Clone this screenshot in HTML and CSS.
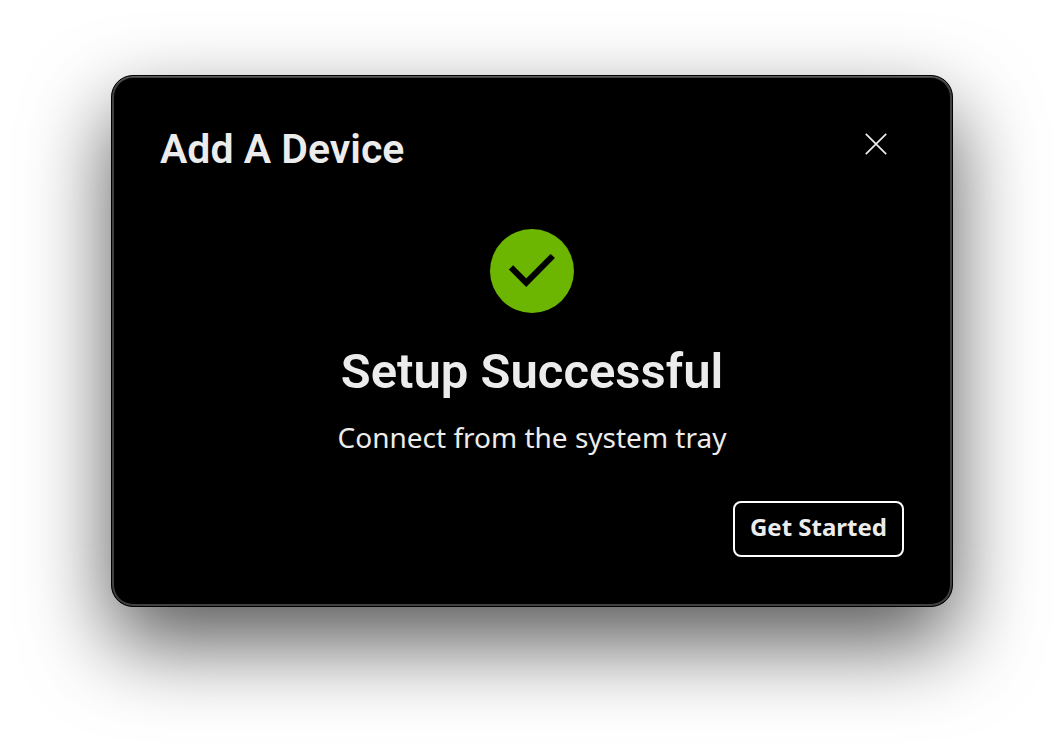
FILE: index.html
```html
<!DOCTYPE html>
<html lang="en">
<head>
    <meta charset="UTF-8">
    <meta name="viewport" content="width=device-width, initial-scale=1.0">
    <title>Add A Device</title>
    <link rel="stylesheet" href="styles.css">
</head>
<body>
    <div class="dialog" role="dialog" aria-labelledby="dialogTitle">
        <div class="dialog-header">
            <h1 id="dialogTitle">Add A Device</h1>
            <button type="button" class="close-button" aria-label="Close">
                <svg width="24" height="24" viewBox="0 0 24 24" fill="none" stroke="currentColor" stroke-width="1.7">
                    <path d="M1.8 1.8 22.2 22.2M22.2 1.8 1.8 22.2" />
                </svg>
            </button>
        </div>
        <div class="dialog-body">
            <svg class="success-icon" width="84" height="84" viewBox="0 0 84 84" aria-hidden="true">
                <circle cx="42" cy="42" r="42" fill="#6cb500" />
                <path d="M21 38.3 36.2 53.7 62.8 27" fill="none" stroke="#000" stroke-width="6" />
            </svg>
            <h2>Setup Successful</h2>
            <p>Connect from the system tray</p>
        </div>
        <div class="dialog-footer">
            <button type="button" class="start-button">Get Started</button>
        </div>
    </div>
</body>
</html>
```

FILE: styles.css
```css
* {
    box-sizing: border-box;
}

body {
    min-height: 100vh;
    margin: 0;
    padding: 75px 111px;
    background-color: #fff;
    color: #ececec;
    font-family: "Noto Sans", sans-serif;
}

.dialog {
    padding: 44px 48px 49px 46px;
    background-color: #000;
    border: 1px solid #000;
    border-radius: 22px;
    box-shadow: inset 0 1px 0 #5c5c5c, inset 0 0 0 2px #404040, 0 36px 84px rgba(0, 0, 0, 0.66);
}

.dialog-header {
    display: flex;
    justify-content: space-between;
    align-items: flex-start;
    padding: 0 16px 0 2px;
}

h1,
h2 {
    margin: 0;
    font-family: Roboto, sans-serif;
    font-weight: 600;
}

h1 {
    font-size: 41px;
    line-height: 58px;
}

h2 {
    margin-top: 28px;
    font-size: 49px;
    line-height: 62px;
}

p {
    margin: 14px 0 0;
    font-size: 28px;
    line-height: 40px;
}

.close-button {
    display: flex;
    margin-top: 12px;
    padding: 0;
    border: none;
    background: none;
    color: #ececec;
    cursor: pointer;
}

.dialog-body {
    display: flex;
    flex-direction: column;
    align-items: center;
    padding: 51px 0 0 2px;
    text-align: center;
}

.dialog-footer {
    display: flex;
    justify-content: flex-end;
    margin-top: 44px;
}

.start-button {
    padding: 10px 15px 14px;
    border: 2px solid #fff;
    border-radius: 8px;
    background-color: #000;
    color: #ececec;
    font-family: inherit;
    font-size: 24px;
    line-height: 28px;
    font-weight: 700;
    cursor: pointer;
}
```
